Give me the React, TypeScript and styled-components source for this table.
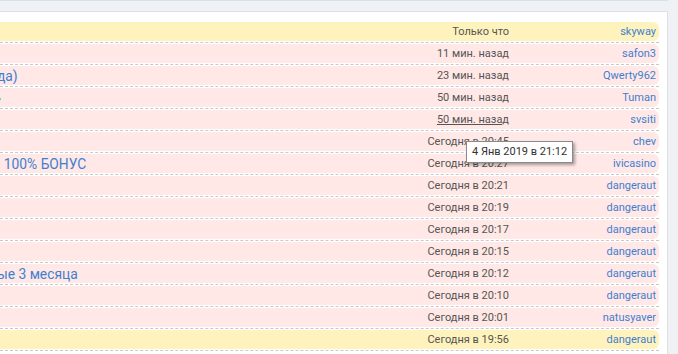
import React from "react";
import styled, { createGlobalStyle } from "styled-components";

const Global = createGlobalStyle`
  html, body { margin: 0; padding: 0; background: #eff1f5; }
  body { font-family: Roboto, "Noto Sans", Arial, sans-serif; overflow: hidden; }
`;

const Page = styled.div`
  width: 678px;
  height: 354px;
  overflow: hidden;
  display: flex;
  flex-direction: column;
`;

const PrevBlock = styled.div`
  width: 668px;
  height: 11px;
  border-top: 1px solid #d6e1ee;
  box-sizing: border-box;
`;

const Panel = styled.div`
  width: 668px;
  flex: 1;
  background: #fff;
  border-top: 1px solid #dcdfe4;
  border-right: 1px solid #dcdfe4;
  box-sizing: border-box;
  padding: 10px 8px 0 0;
`;

const List = styled.ul`
  list-style: none;
  margin: 0;
  padding: 0;
`;

const Item = styled.li`
  padding-bottom: 1px;
  margin-bottom: 1px;
  border-bottom: 1px dashed #c9c9c9;
`;

const Row = styled.div<{ $hl: boolean }>`
  position: relative;
  display: flex;
  align-items: center;
  height: 19px;
  background: ${(p) => (p.$hl ? "#fff3bd" : "#ffe8e6")};
  border-radius: 0 6px 6px 0;
  font-size: 11px;
`;

const Title = styled.div`
  flex: 1;
  min-width: 0;
  white-space: nowrap;
  overflow: hidden;
  color: #3f7fd0;
  font-size: 13.8px;
  margin-left: -3px;
`;

const DateCell = styled.div<{ $hover?: boolean }>`
  width: 140px;
  text-align: right;
  color: #555;
  text-decoration: ${(p) => (p.$hover ? "underline" : "none")};
`;

const User = styled.div`
  width: 150px;
  text-align: right;
  padding-right: 3px;
  box-sizing: border-box;
  color: #3f7fd0;
  font-size: 11px;
`;

const Tip = styled.div`
  position: absolute;
  left: 466px;
  top: 9px;
  z-index: 2;
  background: #fff;
  border: 1px solid #8a8a8a;
  box-shadow: 2px 2px 3px rgba(0, 0, 0, 0.35);
  padding: 3px 5px;
  color: #333;
  font-size: 11px;
  line-height: 14px;
  white-space: nowrap;
`;

type R = { t: string; d: string; u: string; hl?: boolean; hover?: boolean; tip?: string };

const rows: R[] = [
  { t: "", d: "Только что", u: "skyway", hl: true },
  { t: "", d: "11 мин. назад", u: "safon3" },
  { t: "да)", d: "23 мин. назад", u: "Qwerty962" },
  { t: "›", d: "50 мин. назад", u: "Tuman" },
  { t: "", d: "50 мин. назад", u: "svsiti", hover: true },
  { t: "", d: "Сегодня в 20:45", u: "chev", tip: "4 Янв 2019 в 21:12" },
  { t: "\u00a0\u00a0100% БОНУС", d: "Сегодня в 20:27", u: "ivicasino" },
  { t: "", d: "Сегодня в 20:21", u: "dangeraut" },
  { t: "", d: "Сегодня в 20:19", u: "dangeraut" },
  { t: "", d: "Сегодня в 20:17", u: "dangeraut" },
  { t: "", d: "Сегодня в 20:15", u: "dangeraut" },
  { t: "ые 3 месяца", d: "Сегодня в 20:12", u: "dangeraut" },
  { t: "", d: "Сегодня в 20:10", u: "dangeraut" },
  { t: "", d: "Сегодня в 20:01", u: "natusyaver" },
  { t: "", d: "Сегодня в 19:56", u: "dangeraut", hl: true },
];

export default function App() {
  return (
    <Page>
      <Global />
      <PrevBlock />
      <Panel>
        <List>
          {rows.map((r, i) => (
            <Item key={i}>
              <Row $hl={!!r.hl}>
                <Title>{r.t}</Title>
                <DateCell $hover={r.hover}>{r.d}</DateCell>
                <User>{r.u}</User>
                {r.tip && <Tip>{r.tip}</Tip>}
              </Row>
            </Item>
          ))}
        </List>
      </Panel>
    </Page>
  );
}
